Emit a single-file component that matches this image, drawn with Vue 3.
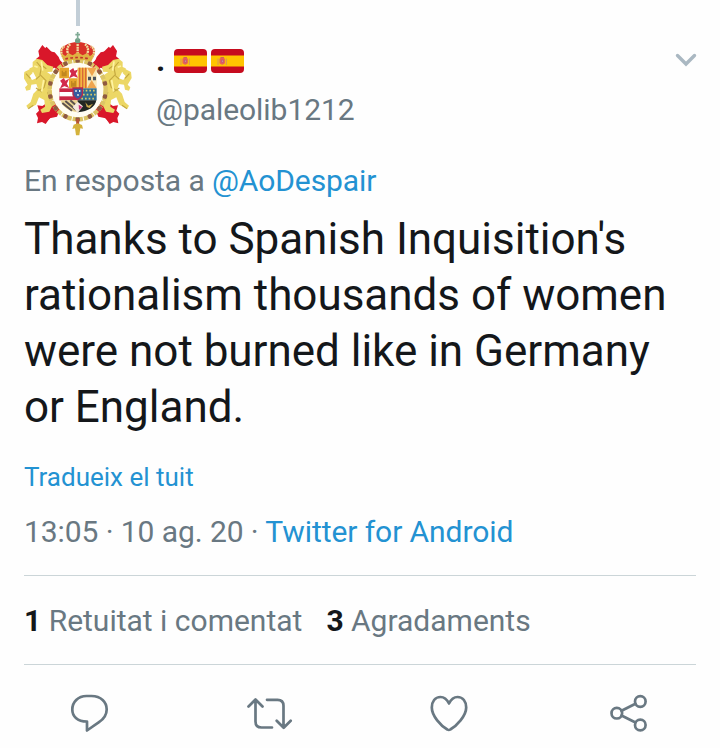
<script setup>
const flags = [1, 2]
const sides = ['translate(-11 -4)', 'translate(387 -4) scale(-1 1)']
const beads = Array.from({ length: 14 }, (_, i) => {
  const angle = (i * 360) / 14
  const a = (angle * Math.PI) / 180
  return { x: 188 + 84 * Math.sin(a), y: 270 - 88 * Math.cos(a), angle }
})
</script>

<template>
  <article class="tweet">
    <div class="thread"><span class="connector"></span></div>
    <header class="head">
      <svg class="avatar" viewBox="27 90 324 324">
        <path d="M85 150L294 359M291 150L82 359" stroke="#d9172a" stroke-width="27" />
        <g fill="#d9172a">
          <path d="M82 135l17 18 20 4 12 14 8 20-28 16-20-9-27 4 5-15-6-10 10-8-3-16z" />
          <path d="M294 135l-17 18-20 4-12 14-8 20 28 16 20-9 27 4-5-15 6-10-10-8 3-16z" />
          <path d="M101 305l34 23-9 22-22 5-12 17-11-6-15 4 3-16-6-13 9-9-5-16 15 2z" />
          <path d="M275 305l-34 23 9 22 22 5 12 17 11-6 15 4-3-16 6-13-9-9 5-16-15 2z" />
        </g>
        <g v-for="side in sides" :key="side" :transform="side">
          <path d="M64 190l12-10 17 4 15 15 18 5-3 15-16 1 20 14 15-5 4 14-19 8-8 20 20 15-1 14-18-7 6 22-12 24-22 4-5-10 14-9-2-20-16-8-9 22-24 12-5-9 13-11 8-25 14-14-5-15-15 2-3 15-12 3-4-10 8-8-12-20 2-18 16-8 9 11-9 9 7 12 13-5-9-18-13-2 2-10 9-4z" fill="#ecd765" />
          <path d="M76 190l14 17-4 21 18 18-6 21-19 9M94 202l11 8M44 225l13 14M74 268l18 12M108 281l9 17M66 320l-15 10M86 231l-12 11" fill="none" stroke="#c4a83f" stroke-width="3.500" />
          <path d="M69 202l10 4M90 188l4 28M97 244l-6 35" fill="none" stroke="#fff3a2" stroke-width="5" />
        </g>
        <ellipse cx="188" cy="270" rx="78" ry="82" fill="#fffdf2" />
        <ellipse cx="188" cy="270" rx="84" ry="88" fill="none" stroke="#dcc566" stroke-width="13" stroke-dasharray="14 3" />
        <rect v-for="b in beads" :key="b.angle" :x="b.x - 6.5" :y="b.y - 6.5" width="13" height="13" rx="4" fill="#8f5a41" :transform="`rotate(${b.angle} ${b.x} ${b.y})`" />
        <path d="M133 203h55v62h-55z" fill="#fff" />
        <path d="M133 203h29v32h-29zM162 235h26v30h-26z" fill="#e5a62c" />
        <path d="M140 229v-17h4v5h6v-5h5v17zM168 260v-17h4v5h6v-5h5v17z" fill="#c18720" />
        <path d="M166 231l5-10-5-8 8-6 3 8 8-3-5 9 5 9-9-4zM139 261l5-10-6-8 8-6 4 8 8-4-5 10 5 9-10-4z" fill="#d22b4c" stroke="#d22b4c" stroke-width="4" />
        <path d="M188 203h28v62h-28z" fill="#f3b642" />
        <path d="M194 203v62M203 203v62M212 203v62" stroke="#d96938" stroke-width="4" />
        <path d="M216 203h29v62h-29z" fill="#f8e6b5" />
        <path d="M216 203h29l-14 26zM216 265l14-25 15 25z" fill="#efa54d" />
        <path d="M219 230h9v11h-9zM234 230h9v11h-9z" fill="#4c535b" />
        <path d="M133 265h55v36h-55z" fill="#c82745" />
        <path d="M133 276h45v13h-45z" fill="#fff" />
        <path d="M188 265h57v36h-57z" fill="#2f6e90" />
        <path d="M201 272h42M204 284h38M199 296h43" stroke="#d9ca6a" stroke-width="5" stroke-dasharray="5 6" />
        <path d="M137 301h51v36c-26-3-46-15-51-36z" fill="#ebd593" />
        <path d="M142 309l29 23M151 303l32 27M166 301l20 18" stroke="#5c514d" stroke-width="6" />
        <path d="M188 301h56c-4 21-23 33-56 36z" fill="#222622" />
        <path d="M188 305l16 14-16 20-15-18z" fill="#f4e8df" />
        <path d="M191 314l11 7-10 9z" fill="#c72f70" />
        <path d="M211 307l9 10 14-6-10 13-9-3z" fill="#c9a74b" />
        <path d="M174 264h28v20q-3 10-14 15-11-5-14-15z" fill="#365ba0" stroke="#b6294c" stroke-width="4" />
        <path d="M181 270h4v6h-4zM192 270h4v6h-4zM187 282h4v6h-4z" fill="#eef2e4" />
        <path d="M146 180q-22-34 3-43 18-11 39-11t39 11q25 9 3 43-41-13-84 0z" fill="#d93228" />
        <path d="M146 176q-16-29 3-37M164 174q-15-30 2-41M188 132v39M212 174q15-30-2-41M230 176q16-29-3-37" fill="none" stroke="#f1dfa0" stroke-width="7" stroke-dasharray="6 2" />
        <path d="M138 160l13 8 10-8 12 6 15-9 15 9 12-6 10 8 13-8-9 25q-41-12-82 0z" fill="#dfb342" />
        <path d="M151 177q37-9 74 0" fill="none" stroke="#c12f2b" stroke-width="5" stroke-dasharray="8 7" />
        <circle cx="188" cy="122" r="8" fill="#6e9d83" />
        <path d="M188 96v24M181 104h14" stroke="#80ab96" stroke-width="5" />
        <path d="M188 357v18" stroke="#b75435" stroke-width="9" />
        <path d="M176 374l12-4 13 5 3 11-8-1-3 21h-10l-3-21-8 2z" fill="#d4b23c" />
      </svg>
      <div class="who">
        <div class="name">
          <span class="dot">.</span>
          <svg v-for="f in flags" :key="f" class="flag" viewBox="0 0 33 24">
            <rect width="33" height="24" rx="4" fill="#c60b1e" />
            <path d="M0 6.500h33v11H0z" fill="#ffc400" />
            <path d="M8.500 9.700q2.700-2.200 5.400 0v4.600q-2.700 2.700-5.400 0z" fill="#e8605a" />
            <path d="M7 9.500v6.500M15.400 9.500v6.500" stroke="#dc9c50" stroke-width="1.200" />
            <path d="M9.500 8.500h3.500M10.600 11h1.600v2.600h-1.600z" fill="#cfa0b8" stroke="#c2566a" stroke-width=".8" />
          </svg>
        </div>
        <div class="handle">@paleolib1212</div>
      </div>
      <svg class="chevron" viewBox="0 0 22 14"><path d="M2.500 2.500L11 11l8.500-8.500" /></svg>
    </header>
    <p class="reply">En resposta a <a>@AoDespair</a></p>
    <p class="text">
      Thanks to Spanish Inquisition's<br />
      rationalism thousands of women<br />
      were not burned like in Germany<br />
      or England.
    </p>
    <a class="translate">Tradueix el tuit</a>
    <p class="meta">13:05 · 10 ag. 20 · <a>Twitter for Android</a></p>
    <div class="stats">
      <span><b>1</b> Retuitat i comentat</span>
      <span><b>3</b> Agradaments</span>
    </div>
    <footer class="actions">
      <svg viewBox="0 0 48 48"><path d="M21.500 7h5C36 7 41.700 13 41.700 20.500c0 6-3 9.500-7.700 12.700L22 41.500v-9C12 32.500 7.300 27 7.300 20.500 7.300 13 13 7 21.500 7z" /></svg>
      <svg viewBox="0 0 48 48"><path d="M3.500 17.500l7-7 7 7M10.500 11v21.500q0 6 6 6H27M22 10.800h10.500q6 0 6 6V38M31.700 31.700l7 7 7-7" /></svg>
      <svg viewBox="0 0 48 48"><path d="M24 14.500C21.500 9.500 18 8 15.500 8 10 8 6.800 12.500 6.800 18.500 6.800 27 16 37 22.300 40.500q1.500 1 3 0C31.500 37 41.200 27 41.200 18.500 41.200 12.500 38 8 32.500 8c-2.500 0-6 1.500-8.500 6.500z" /></svg>
      <svg viewBox="0 0 48 48"><circle cx="11.800" cy="24.200" r="5.300" /><circle cx="35.300" cy="12.500" r="5.300" /><circle cx="35.300" cy="36" r="5.300" /><path d="M16.500 21.800l14-7M16.500 26.500l14 7" /></svg>
    </footer>
  </article>
</template>

<style>
body { margin: 0; background: #fefefe; }
</style>

<style scoped>
.tweet {
  box-sizing: border-box;
  height: 748px;
  padding: 0 24px;
  overflow: hidden;
  background: #fefefe;
  color: #14171a;
  font-family: Roboto, sans-serif;
  display: flex;
  flex-direction: column;
}
p { margin: 0; white-space: nowrap; }
a { color: #2392d2; }
.thread { height: 30px; padding-left: 52px; flex: none; }
.connector { display: block; width: 4px; height: 26px; background: #c2ced7; }
.head { display: flex; height: 108px; flex: none; }
.avatar { width: 108px; height: 108px; flex: none; }
.who { flex: 1; padding-left: 24px; }
.name { display: flex; align-items: center; height: 62px; gap: 4px; }
.dot { width: 14px; font-size: 32px; font-weight: 700; line-height: 62px; margin-top: -2px; }
.flag { width: 33px; height: 24px; }
.handle { margin-top: -2px; font-size: 30px; line-height: 40px; letter-spacing: -0.05px; color: #697882; }
.chevron { width: 22px; height: 14px; margin-top: 23px; margin-right: -1px; }
.chevron path { fill: none; stroke: #aab8c2; stroke-width: 3.4; stroke-linecap: round; }
.reply { margin-top: 23px; font-size: 30px; line-height: 40px; letter-spacing: -0.08px; color: #697882; }
.text { margin-top: 10px; font-size: 44px; line-height: 56px; letter-spacing: -0.02px; }
.translate { margin-top: 26px; font-size: 26px; line-height: 32px; }
.meta { margin-top: 19px; font-size: 30px; line-height: 40px; letter-spacing: -0.08px; color: #697882; }
.stats {
  display: flex;
  gap: 24px;
  height: 88px;
  margin-top: 23px;
  flex: none;
  border-top: 1px solid #cbd5d8;
  border-bottom: 1px solid #cbd5d8;
  font-size: 30px;
  line-height: 90px;
  color: #697882;
  white-space: nowrap;
}
.stats b { color: #14171a; }
.actions { display: flex; justify-content: space-between; padding: 24px 43px 0 41px; }
.actions svg {
  width: 48px;
  height: 48px;
  fill: none;
  stroke: #697882;
  stroke-width: 2.7;
  stroke-linecap: round;
  stroke-linejoin: round;
}
</style>
